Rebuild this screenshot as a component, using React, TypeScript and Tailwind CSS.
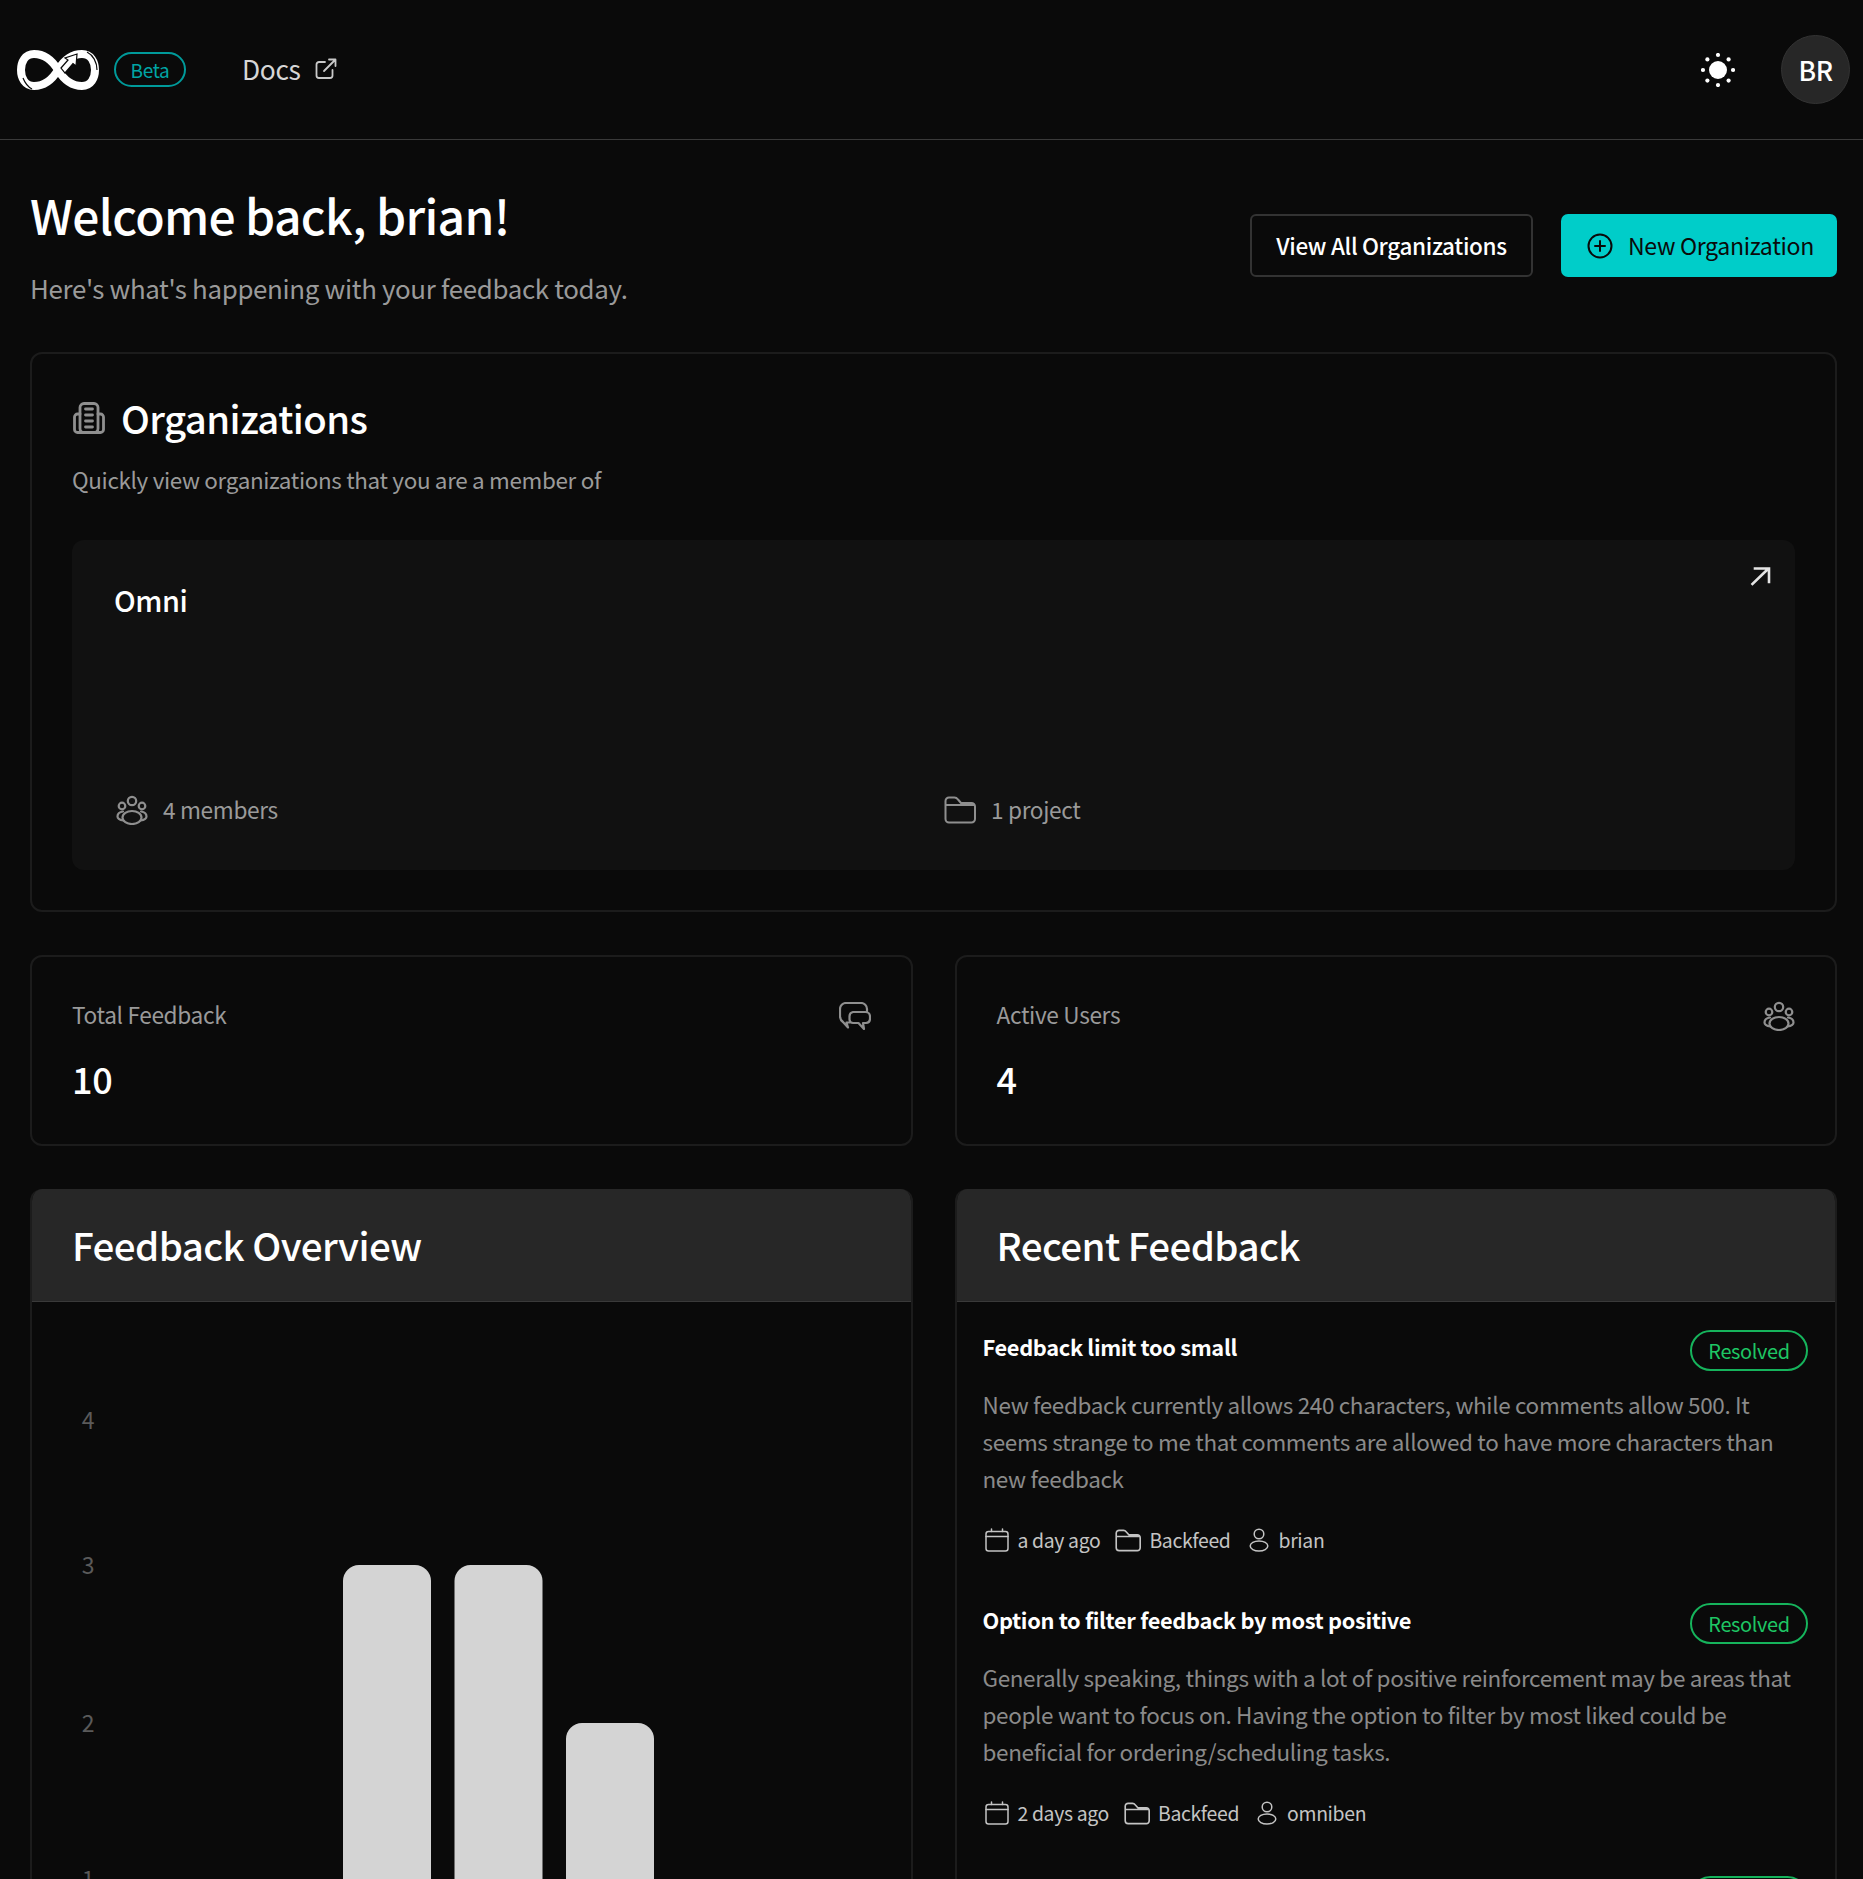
const Logo = () => (
  <svg viewBox="0 0 82 42" className="w-[82px] h-[42px]" fill="none">
    <path d="M41 21 C35 11 27 5 17 5 C8 5 4 13 4 21 C4 29 8 37 17 37 C27 37 35 31 41 21 C47 11 55 5 65 5 C74 5 78 13 78 21 C78 29 74 37 65 37 C55 37 47 31 41 21 Z" stroke="#fff" strokeWidth="8" />
    <path d="M6 29 C8 34 11 38 15 40" stroke="#0a0a0a" strokeWidth="1.200" />
    <path d="M70 3 C76 6 80 13 80 21" stroke="#0a0a0a" strokeWidth="1.200" />
    <path d="M44 19 L51 11 L48 9 L60 5 L59 17 L56 14.500 L48 24 Z" fill="#fff" stroke="#0a0a0a" strokeWidth="1.200" />
  </svg>
);

const ExternalIcon = () => (
  <svg viewBox="0 0 22 22" className="w-[22px] h-[22px]" fill="none" stroke="#c9c9c9" strokeWidth="1.800" strokeLinecap="round" strokeLinejoin="round">
    <path d="M10 4H4a2.500 2.500 0 0 0-2.500 2.500v11A2.500 2.500 0 0 0 4 20h11a2.500 2.500 0 0 0 2.500-2.500V12" />
    <path d="M9 13 20 2M14 1.500h6.500V8" />
  </svg>
);

const SunIcon = () => {
  const dots = [0, 45, 90, 135, 180, 225, 270, 315];
  return (
    <svg viewBox="-17 -17 34 34" className="w-[34px] h-[34px]" fill="#fff">
      <circle r="9" />
      {dots.map((a) => (
        <circle key={a} cx={15 * Math.cos((a * Math.PI) / 180)} cy={15 * Math.sin((a * Math.PI) / 180)} r="2.100" />
      ))}
    </svg>
  );
};

const PlusCircle = () => (
  <svg viewBox="0 0 26 26" className="w-[26px] h-[26px]" fill="none" stroke="#0a0a0a" strokeWidth="2" strokeLinecap="round">
    <circle cx="13" cy="13" r="11.500" />
    <path d="M13 8v10M8 13h10" />
  </svg>
);

const BuildingIcon = () => (
  <svg viewBox="0 0 32 32" className="w-[32px] h-[32px]" fill="none" stroke="#8f8f8f" strokeWidth="2.800" strokeLinecap="round" strokeLinejoin="round">
    <rect x="7" y="1.500" width="18" height="29" rx="4" />
    <path d="M7 12H4.500A3 3 0 0 0 1.500 15v12.500a3 3 0 0 0 3 3H27.500a3 3 0 0 0 3-3V15a3 3 0 0 0-3-3H25" />
    <path d="M12.500 7h7M12.500 13h7M12.500 19h7M12.500 25h7" />
  </svg>
);

const UsersIcon = () => (
  <svg viewBox="0 0 32 30" className="w-[32px] h-[30px]" fill="none" stroke="#8f8f8f" strokeWidth="2.200" strokeLinecap="round" strokeLinejoin="round">
    <circle cx="16" cy="6" r="4.200" />
    <circle cx="6" cy="11" r="3.300" />
    <circle cx="26" cy="11" r="3.300" />
    <ellipse cx="16" cy="22.500" rx="9.500" ry="6.500" />
    <path d="M7 16.500C4 17 1.500 19 1.500 21.500C1.500 23.500 4 25 7.500 25.500M25 16.500C28 17 30.500 19 30.500 21.500C30.500 23.500 28 25 24.500 25.500" />
  </svg>
);

const FolderIcon = ({ cls = "w-[32px] h-[28px]", color = "#8f8f8f" }: { cls?: string; color?: string }) => (
  <svg viewBox="0 0 32 28" className={cls} fill="none" stroke={color} strokeWidth="2" strokeLinecap="round" strokeLinejoin="round">
    <path d="M1.500 9V5a3.500 3.500 0 0 1 3.500-3.500h5.500c1.500 0 2.500.7 3.500 2l3 3.500h10.500a3.500 3.500 0 0 1 3.500 3.500V23a3.500 3.500 0 0 1-3.500 3.500H5A3.500 3.500 0 0 1 1.500 23V9h29" />
  </svg>
);

const ChatIcon = () => (
  <svg viewBox="0 0 32 28" className="w-[32px] h-[28px]" fill="none" stroke="#8f8f8f" strokeWidth="2.200" strokeLinecap="round" strokeLinejoin="round">
    <path d="M11 20.500H7.500l1.500 5-5-5.500C2 18.500 1 17 1 14V7a6 6 0 0 1 6-6h15a6 6 0 0 1 6 6v3" />
    <path d="M14 10h12.500a4.500 4.500 0 0 1 4.500 4.500v2a4.500 4.500 0 0 1-4 4.500l-3 0 1 6-5.500-6H14a3.500 3.500 0 0 1-3.500-3.500v-3A4.500 4.500 0 0 1 14 10Z" />
  </svg>
);

const CalendarIcon = () => (
  <svg viewBox="0 0 24 24" className="w-[24px] h-[24px]" fill="none" stroke="#c4c4c4" strokeWidth="1.500" strokeLinecap="round" strokeLinejoin="round">
    <rect x="1" y="3.500" width="22" height="19.500" rx="2.500" />
    <path d="M1 8.500h22M6.500 1v2.500M17.500 1v2.500" />
  </svg>
);

const UserIcon = () => (
  <svg viewBox="0 0 20 24" className="w-[20px] h-[24px]" fill="none" stroke="#c4c4c4" strokeWidth="1.500">
    <circle cx="10" cy="6" r="4.800" />
    <ellipse cx="10" cy="18" rx="8.800" ry="5" />
  </svg>
);

const ArrowUpRight = () => (
  <svg viewBox="0 0 21 20" className="w-[21px] h-[20px]" fill="none" stroke="#e5e5e5" strokeWidth="2.600" strokeLinecap="square">
    <path d="M2.500 18 18 3M5 2.500h14V16" />
  </svg>
);

const Meta = ({ when, who }: { when: string; who: string }) => (
  <div className="flex items-center text-[19.400px] leading-[30px] text-[#c4c4c4]">
    <span className="ml-[2px]"><CalendarIcon /></span>
    <span className="ml-[9px]">{when}</span>
    <span className="ml-[15px]"><FolderIcon cls="w-[26px] h-[23px]" color="#c4c4c4" /></span>
    <span className="ml-[8px]">Backfeed</span>
    <span className="ml-[18px]"><UserIcon /></span>
    <span className="ml-[10px]">{who}</span>
  </div>
);

const Item = ({ title, lines, when, who }: { title: string; lines: string[]; when: string; who: string }) => (
  <div className="h-[273px]">
    <div className="flex justify-between items-start">
      <div className="-mt-[1px] text-[21.800px] leading-[36px] font-semibold text-white">{title}</div>
      <span className="w-[118px] h-[41px] mr-[1px] flex items-center justify-center rounded-full border-2 border-[#16b45c] text-[#1ec664] text-[19.900px] leading-none">Resolved</span>
    </div>
    <div className="mt-[-4px] pt-[19px] text-[22.470px] leading-[37px] text-[#8a8a8a]">
      {lines.map((l) => (
        <div key={l} className="whitespace-nowrap">{l}</div>
      ))}
    </div>
    <div className="mt-[28px]"><Meta when={when} who={who} /></div>
  </div>
);

const Chart = () => (
  <svg viewBox="0 0 883 620" className="w-[883px] h-[620px] block">
    {[["4", 127], ["3", 272], ["2", 430], ["1", 586]].map(([t, y]) => (
      <text key={t} x="56" y={y as number} fill="#5a5a5a" fontSize="23" textAnchor="middle" fontFamily="'Noto Sans CJK JP', sans-serif">{t}</text>
    ))}
    <path d="M311 620V279a16 16 0 0 1 16-16h56a16 16 0 0 1 16 16V620Z" fill="#d4d4d4" />
    <path d="M422.500 620V279a16 16 0 0 1 16-16h56a16 16 0 0 1 16 16V620Z" fill="#d4d4d4" />
    <path d="M534 620V437a16 16 0 0 1 16-16h56a16 16 0 0 1 16 16V620Z" fill="#d4d4d4" />
  </svg>
);

export default function App() {
  return (
    <div className="h-screen overflow-hidden bg-[#0a0a0a] text-white tracking-[-0.34px] font-['Noto_Sans_CJK_JP','Noto_Sans',sans-serif]">
      <header className="h-[140px] border-b border-[#3a3a3a] flex items-center justify-between pl-[17px] pr-[13px]">
        <div className="flex items-center">
          <Logo />
          <span className="ml-[15px] h-[35px] w-[72px] flex items-center justify-center rounded-full border-2 border-[#009a9a] text-[#00a5a5] text-[19px] leading-none">Beta</span>
          <span className="ml-[56px] text-[26.400px] text-[#d6d6d6] leading-none">Docs</span>
          <span className="ml-[14px] mb-[2px]"><ExternalIcon /></span>
        </div>
        <div className="flex items-center">
          <SunIcon />
          <div className="ml-[46px] w-[69px] h-[69px] rounded-full bg-[#272727] border border-[#333] flex items-center justify-center text-[26.400px] font-medium">BR</div>
        </div>
      </header>

      <main className="ml-[30px] mr-[26px] pt-[43px] flex flex-col gap-[43px]">
        <section className="h-[126px] flex justify-between items-start">
          <div>
            <h1 className="-mt-[3px] text-[48px] leading-[68px] font-medium tracking-[-0.7px]">Welcome back, brian!</h1>
            <p className="mt-[20px] text-[25.900px] leading-[40px] text-[#9a9a9a]">Here's what's happening with your feedback today.</p>
          </div>
          <div className="flex gap-[28px] mt-[31px]">
            <button className="w-[283px] h-[63px] rounded-[6px] border-2 border-[#333] text-[22.500px] font-medium text-white">View All Organizations</button>
            <button className="w-[276px] h-[63px] rounded-[7px] bg-[#00cdc9] flex items-center pl-[26px] text-[#0a0a0a] text-[23.100px]">
              <PlusCircle />
              <span className="ml-[15px]">New Organization</span>
            </button>
          </div>
        </section>

        <section className="h-[560px] rounded-[12px] border-2 border-[#1c1c1c] px-[40px] pt-[36px]">
          <div className="flex items-center h-[56px]">
            <span className="ml-[1px]"><BuildingIcon /></span>
            <h2 className="ml-[16px] text-[38.300px] leading-none font-medium tracking-[-0.58px]">Organizations</h2>
          </div>
          <p className="mt-[15px] text-[22.450px] leading-[36px] text-[#9a9a9a]">Quickly view organizations that you are a member of</p>
          <div className="relative mt-[43px] h-[330px] rounded-[12px] bg-[#111111] px-[42px] pt-[42px]">
            <div className="text-[28.800px] leading-[36px] font-medium tracking-[-0.44px]">Omni</div>
            <span className="absolute right-[24px] top-[26px]"><ArrowUpRight /></span>
            <div className="grid grid-cols-2 gap-[21px] mt-[174px] text-[22.650px] leading-[36px] text-[#9a9a9a]">
              <div className="flex items-center pl-[2px]"><UsersIcon /><span className="ml-[15px]">4 members</span></div>
              <div className="flex items-center"><FolderIcon /><span className="ml-[15px]">1 project</span></div>
            </div>
          </div>
        </section>

        <section className="grid grid-cols-2 gap-[42px]">
          {[
            { label: "Total Feedback", value: "10", icon: <ChatIcon /> },
            { label: "Active Users", value: "4", icon: <UsersIcon /> },
          ].map((c) => (
            <div key={c.label} className="h-[191px] rounded-[12px] border-2 border-[#1c1c1c] px-[40px] pt-[40px]">
              <div className="flex justify-between items-center h-[36px]">
                <span className="text-[22.650px] text-[#9a9a9a]">{c.label}</span>
                <span className="mt-[1px]">{c.icon}</span>
              </div>
              <div className="mt-[15px] text-[36px] leading-[60px] font-medium">{c.value}</div>
            </div>
          ))}
        </section>

        <section className="grid grid-cols-2 gap-[42px] items-start">
          <div className="rounded-t-[12px] border-x-2 border-[#1c1c1c] overflow-hidden">
            <div className="h-[113px] -mx-[2px] bg-[#272727] border-b border-[#3a3a3a] flex items-center pl-[42px] text-[38.500px] font-medium tracking-[-0.58px]">Feedback Overview</div>
            <Chart />
          </div>
          <div className="rounded-t-[12px] border-x-2 border-[#1c1c1c] overflow-hidden">
            <div className="h-[113px] -mx-[2px] bg-[#272727] border-b border-[#3a3a3a] flex items-center pl-[42px] text-[38.500px] font-medium tracking-[-0.58px]">Recent Feedback</div>
            <div className="pl-[26px] pr-[26px] pt-[28px]">
              <Item
                title="Feedback limit too small"
                lines={[
                  "New feedback currently allows 240 characters, while comments allow 500. It",
                  "seems strange to me that comments are allowed to have more characters than",
                  "new feedback",
                ]}
                when="a day ago"
                who="brian"
              />
              <Item
                title="Option to filter feedback by most positive"
                lines={[
                  "Generally speaking, things with a lot of positive reinforcement may be areas that",
                  "people want to focus on. Having the option to filter by most liked could be",
                  "beneficial for ordering/scheduling tasks.",
                ]}
                when="2 days ago"
                who="omniben"
              />
              <div className="flex justify-end"><span className="w-[118px] h-[41px] mr-[1px] rounded-full border-2 border-[#16b45c]" /></div>
            </div>
          </div>
        </section>
      </main>
    </div>
  );
}
